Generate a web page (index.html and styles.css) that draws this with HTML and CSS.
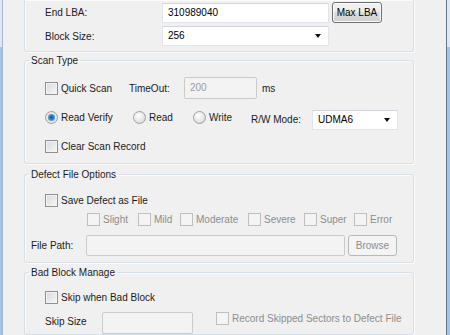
FILE: index.html
```html
<!DOCTYPE html>
<html>
<head>
  <meta charset="utf-8">
  <title>Surface Scan Settings</title>
  <link rel="stylesheet" href="styles.css">
</head>
<body>
<div class="window">

  <fieldset class="group group-top">
    <div class="row r-lba">
      <span class="label w117">End LBA:</span>
      <div class="textbox w167">310989040</div>
      <div class="btn">Max LBA</div>
    </div>
    <div class="row r-block">
      <span class="label w117">Block Size:</span>
      <div class="combo w167"><span>256</span><span class="arrow"></span></div>
    </div>
  </fieldset>

  <fieldset class="group g-scan">
    <legend>Scan Type</legend>
    <div class="row r-quick">
      <label class="check w84"><span class="box"></span>Quick Scan</label>
      <span class="label w55">TimeOut:</span>
      <div class="textbox disabled w73">200</div>
      <span class="label unit">ms</span>
    </div>
    <div class="row r-mode">
      <label class="radio w88"><span class="dot on"></span>Read Verify</label>
      <label class="radio w60"><span class="dot"></span>Read</label>
      <label class="radio w58"><span class="dot"></span>Write</label>
      <span class="label w61">R/W Mode:</span>
      <div class="combo w86"><span>UDMA6</span><span class="arrow"></span></div>
    </div>
    <div class="row r-clear">
      <label class="check"><span class="box"></span>Clear Scan Record</label>
    </div>
  </fieldset>

  <fieldset class="group g-defect">
    <legend>Defect File Options</legend>
    <div class="row r-save">
      <label class="check"><span class="box"></span>Save Defect as File</label>
    </div>
    <div class="row r-levels">
      <label class="check off w51"><span class="box"></span>Slight</label>
      <label class="check off w42"><span class="box"></span>Mild</label>
      <label class="check off w68"><span class="box"></span>Moderate</label>
      <label class="check off w56"><span class="box"></span>Severe</label>
      <label class="check off w50"><span class="box"></span>Super</label>
      <label class="check off"><span class="box"></span>Error</label>
    </div>
    <div class="row r-path">
      <span class="label w55">File Path:</span>
      <div class="textbox disabled w259"></div>
      <div class="btn disabled">Browse</div>
    </div>
  </fieldset>

  <fieldset class="group g-bad">
    <legend>Bad Block Manage</legend>
    <div class="row r-skip">
      <label class="check"><span class="box"></span>Skip when Bad Block</label>
    </div>
    <div class="row r-size">
      <span class="label w57">Skip Size</span>
      <div class="textbox disabled w91"></div>
      <label class="check off record"><span class="box"></span>Record Skipped Sectors to Defect File</label>
    </div>
  </fieldset>

</div>
</body>
</html>
```

FILE: styles.css
```css
html, body {
  margin: 0;
  padding: 0;
  height: 335px;
  overflow: hidden;
}

body {
  background: linear-gradient(to bottom, #dde8f4 0, #dde8f4 47px, #a8c3e1 47px, #a8c3e1 100%);
  font-family: "Liberation Sans", Arial, sans-serif;
  font-size: 10px;
  color: #1b1b1b;
}

.window {
  margin-left: 2px;
  width: 443px;
  height: 335px;
  background: #f0f0f0;
  border-left: 1px solid #a9b8c8;
  border-right: 1px solid #5d7795;
}

/* group boxes */
.group {
  box-sizing: border-box;
  width: 390px;
  margin: 0 0 0 21px;
  padding: 0;
  border: 1px solid #d5dfe5;
  border-radius: 3px;
  box-shadow: inset 1px 1px 0 #fbfbfb, 1px 1px 0 #fbfbfb;
}

.group legend {
  margin-left: 4px;
  padding: 0 2px;
  line-height: 13px;
  color: #1b1b1b;
}

.group-top {
  border-top: none;
  border-radius: 0 0 3px 3px;
  padding: 2px 0 5px;
}

.g-scan { margin-top: 2px; padding-bottom: 10px; }
.g-defect { margin-top: 4px; padding-bottom: 6px; }
.g-bad { margin-top: 3px; }

.row {
  display: flex;
  align-items: center;
  padding-left: 20px;
  line-height: 13px;
}

.r-block { margin-top: 3px; }
.r-quick { margin-top: 10px; }
.r-mode { margin-top: 11px; align-items: flex-start; }
.r-mode .radio { margin-top: 1px; }
.r-mode .label { margin-top: 3px; }
.r-clear { margin-top: 10px; }
.r-save { margin-top: 13px; }
.r-levels { margin-top: 6px; padding-left: 62px; }
.r-path { margin-top: 9px; padding-left: 6px; }
.r-skip { margin-top: 12px; }
.r-size { margin-top: 8px; align-items: flex-start; }
.r-size .label { margin-top: 3px; }
.r-size .record { margin-left: 23px; }

/* widths */
.w42 { width: 42px; }
.w50 { width: 50px; }
.w51 { width: 51px; }
.w55 { width: 55px; }
.w56 { width: 56px; }
.w57 { width: 57px; }
.w58 { width: 58px; }
.w60 { width: 60px; }
.w61 { width: 61px; }
.w68 { width: 68px; }
.w84 { width: 84px; }
.w88 { width: 88px; }
.w117 { width: 117px; }
.w73 { width: 73px; }
.w86 { width: 86px; }
.w91 { width: 91px; }
.w167 { width: 167px; }
.w259 { width: 259px; }

.label {
  flex: none;
  white-space: nowrap;
}

.unit { margin-left: 5px; }

/* text boxes and combos */
.textbox, .combo {
  box-sizing: border-box;
  flex: none;
  height: 20px;
  padding: 0 5px;
  background: #fff;
  border: 1px solid #e1e4e8;
  border-top-color: #d2d6dc;
  line-height: 18px;
  color: #000;
}

.textbox.disabled {
  height: 22px;
  background: #f3f3f3;
  border: 1px solid #cbcbcb;
  border-radius: 2px;
  color: #9d9d9d;
  line-height: 20px;
}

.r-path .textbox.disabled { height: 21px; }

.combo {
  display: flex;
  align-items: center;
  justify-content: space-between;
  line-height: 18px;
}

.arrow {
  width: 0;
  height: 0;
  margin-right: 2px;
  border-left: 3px solid transparent;
  border-right: 3px solid transparent;
  border-top: 4px solid #111;
}

/* buttons */
.btn {
  box-sizing: border-box;
  flex: none;
  margin-left: 3px;
  width: 50px;
  height: 21px;
  border: 1px solid #707070;
  border-radius: 3px;
  background: linear-gradient(to bottom, #f2f2f2 0, #ebebeb 50%, #dddddd 50%, #cfcfcf 100%);
  box-shadow: inset 0 0 0 1px #fbfbfb;
  text-align: center;
  line-height: 19px;
  color: #000;
}

.btn.disabled {
  width: 49px;
  border-color: #b5b9bc;
  background: #f4f4f4;
  box-shadow: none;
  color: #8d8d8d;
}

/* check boxes and radio buttons */
.check, .radio {
  display: flex;
  align-items: center;
  flex: none;
  white-space: nowrap;
}

.box, .dot {
  box-sizing: border-box;
  flex: none;
  width: 13px;
  height: 13px;
  margin-right: 3px;
  border: 1px solid #8f8f8f;
  background: linear-gradient(135deg, #d6d8db 0, #eeeeee 70%, #f8f8f8 100%);
  box-shadow: inset 0 0 0 1px #f4f4f4;
}

.check.off { color: #8d8d8d; }

.check.off .box {
  border-color: #bfbfbf;
  background: #f4f4f4;
  box-shadow: none;
}

.dot {
  border-radius: 50%;
  border-color: #a0a0a0;
  background: radial-gradient(circle at 40% 35%, #ffffff 0, #e4e4e4 60%, #d2d2d2 100%);
  box-shadow: none;
}

.dot.on {
  background: radial-gradient(circle, #1e5c8e 0, #2d7dbb 2px, #6fb0e0 3.5px, #e8e8e8 4px, #dcdcdc 100%);
}
```
